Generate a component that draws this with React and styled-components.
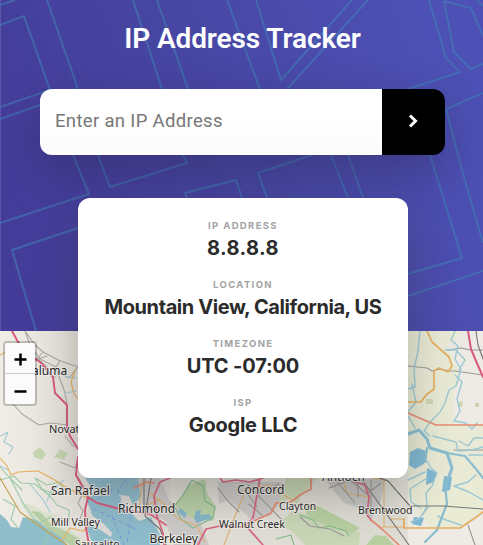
import React from "react";
import styled, { createGlobalStyle } from "styled-components";

const GlobalStyle = createGlobalStyle`
  *, *::before, *::after { box-sizing: border-box; }
  body { margin: 0; overflow: hidden; }
`;

const Page = styled.main`
  position: relative;
  display: flex;
  flex-direction: column;
  width: 483px;
  height: 545px;
  overflow: hidden;
  font-family: Inter, "Liberation Sans", sans-serif;
`;

const Header = styled.header`
  position: relative;
  z-index: 2;
  display: flex;
  flex-direction: column;
  align-items: center;
  flex: 0 0 331px;
  padding: 22px 38px 0 40px;
  background: linear-gradient(68deg, #443b98 5%, #4746a3 48%, #4d50b4 88%);
  box-shadow: inset 1px 0 rgba(255, 255, 255, 0.13);
`;

const Pattern = styled.svg`
  position: absolute;
  inset: 0;
  width: 483px;
  height: 331px;
  fill: none;
  stroke: #4183b5;
  stroke-opacity: 0.56;
  stroke-width: 2;
`;

const Title = styled.h1`
  position: relative;
  margin: 0 0 33px;
  font: 600 28px/34px Roboto, sans-serif;
  letter-spacing: -0.1px;
  color: #fff;
  white-space: nowrap;
`;

const SearchForm = styled.form`
  position: relative;
  display: flex;
  width: 405px;
  height: 66px;
  margin: 0;
  border-radius: 12px;
  box-shadow: 0 18px 45px rgba(35, 30, 65, 0.36);
`;

const SearchInput = styled.input`
  flex: 1;
  min-width: 0;
  padding: 0 15px 2px;
  border: 0;
  border-radius: 12px 0 0 12px;
  outline: 0;
  background: linear-gradient(#fff 40%, #fbfbfb);
  font: 400 18.5px Roboto, sans-serif;
  letter-spacing: 0.33px;
  &::placeholder { color: #777; opacity: 1; }
`;

const SearchButton = styled.button`
  display: grid;
  place-items: center;
  width: 63px;
  padding: 0 0 2px;
  border: 0;
  border-radius: 0 12px 12px 0;
  background: #000;
`;

const Chevron = styled.svg`
  width: 11px;
  height: 14px;
  fill: none;
  stroke: #fff;
  stroke-width: 3;
`;

const ResultCard = styled.section`
  position: absolute;
  top: 198px;
  left: 78px;
  display: flex;
  flex-direction: column;
  gap: 15px;
  width: 330px;
  height: 280px;
  padding: 20px 16px;
  border-radius: 12px;
  background: #fff;
  box-shadow: 0 18px 45px rgba(50, 50, 50, 0.3);
  text-align: center;
`;

const Detail = styled.div`
  height: 44px;
`;

const DetailLabel = styled.div`
  height: 16px;
  font-size: 9.5px;
  font-weight: 700;
  line-height: 16px;
  letter-spacing: 1.35px;
  color: #a3a3a3;
`;

const DetailValue = styled.div`
  margin-inline: -8px;
  font-size: 20px;
  font-weight: 650;
  line-height: 28px;
  letter-spacing: ${(p) => p.$tracking}px;
  color: #2b2b2b;
  white-space: nowrap;
`;

const MapPanel = styled.section`
  position: relative;
  height: 214px;
`;

const MapDrawing = styled.svg`
  display: block;
  width: 483px;
  height: 214px;
  fill: none;
  stroke-linejoin: round;
  stroke-linecap: round;
`;

const Road = styled.path`
  stroke: ${(p) => p.$color};
  stroke-width: ${(p) => p.$width || 1.1};
`;

const Area = styled.path`
  fill: ${(p) => p.$color};
`;

const Place = styled.text`
  fill: #292929;
  stroke: #f5f2ed;
  stroke-opacity: 0.8;
  stroke-width: 2px;
  paint-order: stroke;
  font-family: "Noto Sans", sans-serif;
  font-size: ${(p) => p.$size || 12}px;
`;

const ZoomControl = styled.div`
  position: absolute;
  top: 10px;
  left: 3px;
  width: 34px;
  border: 2px solid rgba(0, 0, 0, 0.2);
  border-radius: 4px;
  background-clip: padding-box;
`;

const ZoomButton = styled.button`
  display: grid;
  place-items: center;
  width: 30px;
  height: ${(p) => (p.$divided ? 31 : 30)}px;
  padding: ${(p) => (p.$divided ? "3px 0 0" : "4px 0 0")};
  border: 0;
  border-bottom: ${(p) => (p.$divided ? "1px solid #ccc" : "0")};
  border-radius: ${(p) => (p.$divided ? "2px 2px 0 0" : "0 0 2px 2px")};
  background: #fbfbfb;
  color: #000;
`;

const ZoomGlyph = styled.svg`
  width: 13px;
  height: 13px;
  stroke: currentColor;
  stroke-width: 2.5;
`;

const details = [
  ["IP ADDRESS", "8.8.8.8", 0.4],
  ["LOCATION", "Mountain View, California, US", -0.42],
  ["TIMEZONE", "UTC -07:00", -0.15],
  ["ISP", "Google LLC", -0.25],
];

const streetLines = [
  "M0 5L15 0M0 25L24 16L50 90L0 107M0 119L60 98",
  "M47 0L78 89M73 155L89 194L0 223M98 155L110 187L187 163L183 155",
  "M133 0L162 89M157 0L188 89M78 228L12 250L36 331",
  "M227 0L260 89M256 0L281 80L352 0M368 0L288 88",
  "M187 198L185 193L236 180L242 198M267 198L258 173L312 155",
  "M331 155L348 198M348 155L363 198M430 155L462 258L408 274",
  "M408 296L483 271M408 89L460 72L446 58L429 0",
  "M444 1L471 8L483 36M444 1L454 52L471 69L483 64",
  "M483 93L446 109L462 170L483 243M477 0L483 6",
];

const areas = [
  ["#e8ead5", "M408 331H461L447 347L459 370L454 391L455 425L483 425V545H408Z"],
  ["#eeeae4", "M449 351H483V424H455L454 394L461 374Z"],
  ["#eeeae4", "M408 497L428 508L483 510V545H408Z"],
  ["#e9ebd5", "M410 475H483V510L460 529H432L411 502Z"],
  ["#c6d6b1", "M33 452L40 447L46 454L42 460L34 457ZM54 457L60 449L68 453L64 460Z"],
  ["#d9e0cc", "M20 502L34 506L44 512L60 516L69 529L84 540L83 545H66L48 529L31 519Z"],
  ["#b6cda4", "M31 511L40 512L52 525L65 531L80 539L82 545H70L48 529Z"],
  ["#8fbdca", "M0 514L7 520L11 527L19 528L23 517L37 520L48 529L62 538L67 545H0Z"],
  ["#8fbccb", "M85 478H147L142 493L151 517L160 535V545H93L86 526L91 511L87 501L94 492Z"],
  ["#ddd9d5", "M88 507L93 516L104 524L112 533L111 537L99 529L87 522ZM119 495L129 496L133 505L139 499L145 489L151 478H170V532L158 522L151 517L139 521L133 515L122 509Z"],
  ["#cccac8", "M138 478H160L169 500L200 521L209 545H174L165 520L143 514ZM218 482H281L289 492L270 516L252 520L229 500L219 504Z"],
  ["#b9d0a6", "M188 485L205 479L207 493L216 507L213 521L193 519L174 505L183 495Z"],
  ["#c9d6b6", "M286 478H318L302 494L297 505L289 499L279 504ZM292 511L307 514L325 518L339 528L360 532L359 545H305L291 530L276 527Z"],
  ["#c8c7c5", "M325 479H385L381 500L371 520L359 508L344 503L334 491Z"],
  ["#b8cfa1", "M301 503L320 507L341 518L360 528L353 533L332 528L309 518ZM366 545L375 535L386 536L394 545Z"],
  ["#80b8d2", "M410 452L418 448L426 451L424 464L415 469L409 465ZM444 476L452 477L450 490L442 492ZM427 468L437 473L433 482L426 485ZM414 517L424 518L421 526L412 524Z"],
  ["#84b6c9", "M180 508L187 513L185 518L178 512ZM196 511L201 510L200 515L209 514L212 518L197 523L194 518Z"],
  ["#cdd6b4", "M426 399H433V404H426ZM457 402L463 401L462 407H458ZM475 403H479V407H475Z"],
];

const fineLines = [
  ["#aaa7a5", "M25 331L35 345L43 352L60 361L56 367L40 359L30 345ZM61 361L78 367M43 352L34 362L26 359M13 404L22 414L39 425L50 423L68 425M78 367L69 378L57 371L64 390L67 403M60 462L75 468L78 460M78 477L85 489L78 503L83 511L80 519M65 436L74 447M48 368L38 359L47 356"],
  ["#9fcbd2", "M0 436L8 432L4 442L13 447L9 454M54 378L60 371L68 377L76 378M66 393L76 391M30 484L44 501L50 512M0 466L8 470M64 480L51 491L47 501"],
  ["#9cc9a8", "M0 480L14 476L21 483L35 484L50 496L57 505L69 510L69 520L60 526L51 517L38 524L23 503L10 478M35 478L47 485L59 482L64 489L51 493L42 489ZM44 545L49 529M3 499L15 506L11 519L18 528M0 467L10 478L22 490"],
  ["#82b98a", "M181 498L192 480L203 486L205 501L215 507L213 518L193 528L181 519L174 506ZM276 539L291 535L294 545M300 515L313 520L319 528L330 526L346 531L349 536"],
  ["#c4a04c", "M0 478L20 512L34 522L49 533L67 545"],
  ["#e7ae5b", "M0 458L7 466L11 475L18 472L38 471L53 479L69 489L82 495L89 499M62 540L70 528L83 531L88 527M31 358L12 350M0 355L10 350M75 370L71 382L74 394L78 399"],
  ["#deb06e", "M142 483L139 508L160 500M150 493L165 505L178 519L196 525L205 542M224 545L237 511L246 490L268 485L292 500M342 478L347 493L368 497M373 478L384 480V527M382 527H404V519H390"],
  ["#757678", "M144 478V512M151 478L145 516L160 529L166 545M362 480L409 545M377 477L388 481L410 506"],
  ["#9a9896", "M218 488L228 501L239 512M249 504L262 515M248 485L282 520M257 495L279 484M245 490L257 507M329 488L350 480L367 494L381 483M333 477L355 503M358 477V497M371 480V514M300 517L310 526L330 529L344 536M408 366L427 368L432 371L439 369L450 371L455 371L483 375M448 350L461 348L470 350H483M454 450H483M468 525L475 545"],
];

const riverLines = [
  "M420 331L418 351L414 369L415 387L408 389M455 331L451 340L458 346L455 359L461 369L459 376L456 386L449 390L445 403L440 412L430 422L424 431L430 436",
  "M427 448L425 458L431 468L437 473L432 486L426 493L427 506L423 514M408 480L425 472M427 478L410 489L411 502L421 508",
  "M455 375L462 382L457 399L460 411L454 421L466 423L472 429L477 423M433 436L448 440L456 442L458 451L472 450L483 447",
  "M476 475L468 482L454 486L469 492L483 500M438 516L446 520L461 525M428 507L420 518L411 522M445 350L456 350L465 360L459 370",
  "M412 384L416 402L407 413M408 416L415 428M484 438H474L468 446L459 441M483 455L469 455",
];

const labels = [
  [32, 375, 12, "aluma"],
  [49, 433, 11, "Novato"],
  [51, 495, 12, "San Rafael"],
  [118, 513, 12, "Richmond"],
  [51, 525.5, 10.5, "Mill Valley"],
  [75, 547.5, 10.5, "Sausalito"],
  [149.5, 542.5, 12, "Berkeley"],
  [237, 494, 12, "Concord"],
  [279, 509.5, 10.5, "Clayton"],
  [219, 528, 10.5, "Walnut Creek"],
  [322, 480.5, 12, "Antioch"],
  [358, 514, 10.5, "Brentwood"],
];

function CityMap() {
  return (
    <MapDrawing viewBox="0 331 483 214" aria-label="Map">
      <defs>
        <linearGradient id="land" x1="0" x2="1">
          <stop offset="0" stopColor="#f0ede6" />
          <stop offset="0.18" stopColor="#e3dfd8" />
          <stop offset="0.8" stopColor="#dddcd3" />
          <stop offset="1" stopColor="#f0ebe7" />
        </linearGradient>
      </defs>
      <rect y="331" width="483" height="214" fill="url(#land)" />
      {areas.map(([color, d]) => <Area key={d} $color={color} d={d} />)}
      {fineLines.map(([color, d]) => <Road key={d} $color={color} d={d} />)}
      {riverLines.map((d) => <Road key={d} $color="#9cc8d4" $width={1.4} d={d} />)}
      <Road $color="#8abdd0" $width={3} d="M408 434L419 430L427 439L430 448L447 453L452 468L446 485" />
      <Road $color="#8abdd0" $width={2.2} d="M447 453L465 456L476 469L483 478M445 485L447 504L443 514L437 530L425 542M427 448L425 462" />
      <Road $color="#718bd5" $width={0.7} strokeDasharray="4 3" d="M127 479L118 490L122 505M112 490L98 499M94 509L137 530M112 516L124 545M132 510L127 544" />
      <Road $color="#e6ae60" $width={1.7} d="M427 331L432 342L449 357L452 366L448 372L439 368L434 371V389L426 395L421 402L408 402M404 519V528H460L475 518L483 512" />
      <Road $color="#e68a70" $width={1.7} d="M408 413L424 420L436 425H483M254 521L271 513L276 503L291 502L300 495L311 489V478M371 520L382 529L399 545M134 488L146 482L154 483" />
      <Road $color="#d75b7e" $width={2} d="M12 331L18 342L30 355L40 362L53 377L55 393L67 405L67 428L70 436L78 449M78 457L76 475L88 497L97 503L120 509M88 497L85 510L86 528L89 545M468 331L471 349L476 361L483 377" />
      <Road $color="#d7657f" $width={1.7} d="M170 478L160 482L154 496L157 516L163 533L164 545M118 509L150 514L166 525M198 545L206 529L220 526L244 527L253 518L260 478M220 478L223 482L236 480L250 482L263 478M247 527L263 545M355 482L365 485L369 497L367 515L371 520" />
      <Road $color="#777" d="M476 331L478 345L483 359M377 477L388 481L410 506L443 506L483 509" />
      {labels.map(([x, y, size, name]) => (
        <Place key={name} x={x} y={y} $size={size}>{name}</Place>
      ))}
    </MapDrawing>
  );
}

export default function App() {
  return (
    <Page>
      <GlobalStyle />
      <Header>
        <Pattern viewBox="0 0 483 331" aria-hidden="true">
          {streetLines.map((d) => <path key={d} d={d} />)}
        </Pattern>
        <Title>IP Address Tracker</Title>
        <SearchForm onSubmit={(event) => event.preventDefault()}>
          <SearchInput placeholder="Enter an IP Address" aria-label="IP address" />
          <SearchButton aria-label="Search">
            <Chevron viewBox="0 0 11 14"><path d="M2 1.5L7.5 7L2 12.5" /></Chevron>
          </SearchButton>
        </SearchForm>
        <ResultCard>
          {details.map(([label, value, tracking]) => (
            <Detail key={label}>
              <DetailLabel>{label}</DetailLabel>
              <DetailValue $tracking={tracking}>{value}</DetailValue>
            </Detail>
          ))}
        </ResultCard>
      </Header>
      <MapPanel>
        <CityMap />
        <ZoomControl>
          <ZoomButton $divided aria-label="Zoom in">
            <ZoomGlyph viewBox="0 0 13 13"><path d="M0.5 6.5H12.5M6.5 0.5V12.5" /></ZoomGlyph>
          </ZoomButton>
          <ZoomButton aria-label="Zoom out">
            <ZoomGlyph viewBox="0 0 13 13"><path d="M0.5 6.5H12.5" /></ZoomGlyph>
          </ZoomButton>
        </ZoomControl>
      </MapPanel>
    </Page>
  );
}
